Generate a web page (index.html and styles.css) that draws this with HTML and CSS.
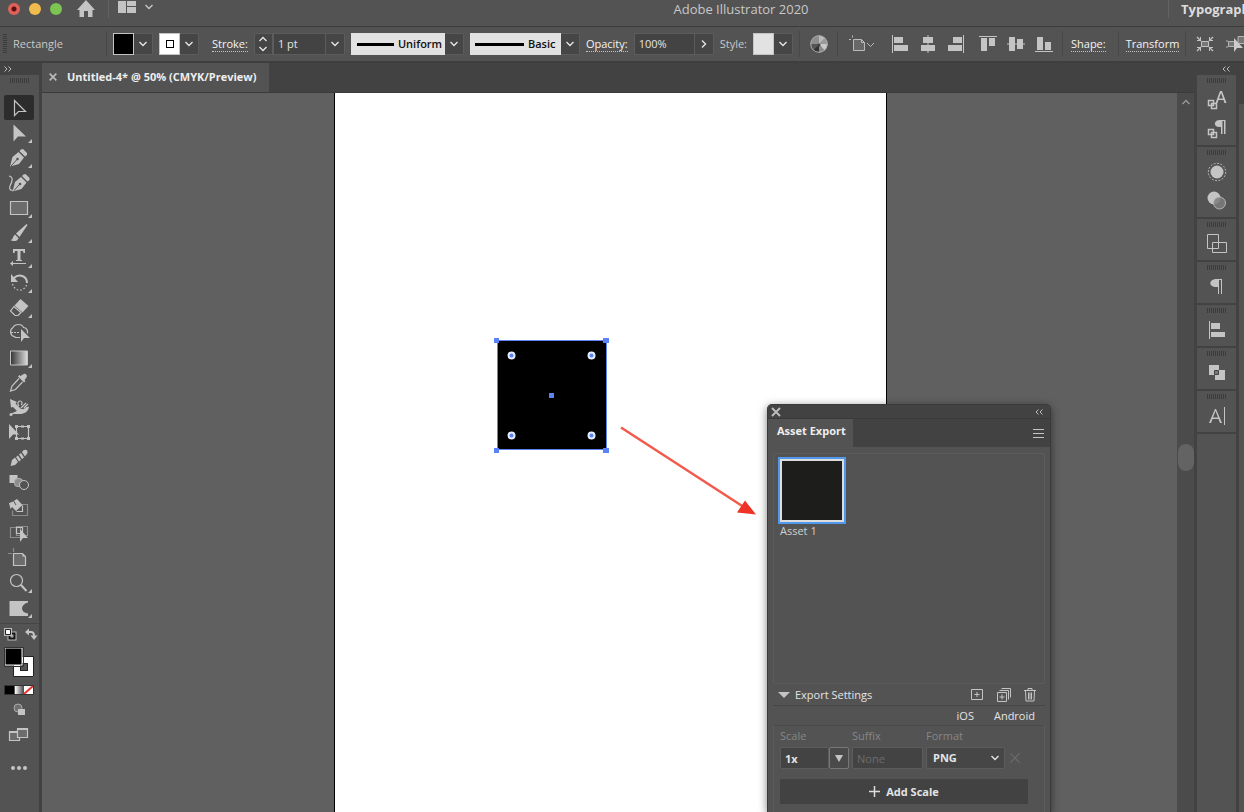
FILE: index.html
```html
<!DOCTYPE html>
<html lang="en">
<head>
    <meta charset="UTF-8">
    <meta name="viewport" content="width=device-width, initial-scale=1.0">
    <title>Adobe Illustrator 2020</title>
    <link rel="stylesheet" href="styles.css">
</head>
<body>
    <svg class="defs" aria-hidden="true">
        <symbol id="down" viewBox="0 0 10 6"><path d="M1.5 1L5 4.5 8.5 1" fill="none" stroke="currentColor" stroke-width="1.4"/></symbol>
        <symbol id="double" viewBox="0 0 8 6"><path d="M3.5 .5L1 3l2.5 2.5M7.5 .5L5 3l2.5 2.5" fill="none" stroke="currentColor"/></symbol>
        <symbol id="cross" viewBox="0 0 12 12"><path d="M2 2l8 8M10 2l-8 8" fill="none" stroke="currentColor"/></symbol>
    </svg>

    <header class="titlebar">
        <div class="window-buttons">
            <button class="light red" aria-label="Close"></button>
            <button class="light yellow" aria-label="Minimise"></button>
            <button class="light green" aria-label="Zoom"></button>
        </div>
        <button class="home" aria-label="Home"><svg width="20" height="18" viewBox="0 0 20 18"><path d="M10 0L1 10h2.5v7H8v-6h4v6h4.500v-7H19z"/></svg></button>
        <button class="arrange" aria-label="Arrange documents">
            <svg width="18" height="12" viewBox="0 0 18 12"><path d="M0 0h8v12H0zM9 0h9v5H9zM9 6h9v6H9z"/></svg>
            <svg width="10" height="6"><use href="#down"/></svg>
        </button>
        <h1>Adobe Illustrator 2020</h1>
        <button class="workspace">Typography</button>
    </header>

    <div class="controls">
        <span class="grip-side"></span>
        <span class="object-type">Rectangle</span>
        <span class="rule"></span>
        <div class="combo">
            <button class="swatch black" aria-label="Fill"></button>
            <button class="drop" aria-label="Fill options"><svg width="10" height="6"><use href="#down"/></svg></button>
        </div>
        <div class="combo">
            <button class="swatch white" aria-label="Stroke colour"></button>
            <button class="drop" aria-label="Stroke options"><svg width="10" height="6"><use href="#down"/></svg></button>
        </div>
        <label class="dotted stroke-label" for="stroke">Stroke:</label>
        <div class="combo">
            <div class="stepper">
                <button aria-label="Increase"><svg class="up" width="10" height="6"><use href="#down"/></svg></button>
                <button aria-label="Decrease"><svg width="10" height="6"><use href="#down"/></svg></button>
            </div>
            <input class="stroke-input" id="stroke" type="text" value="1 pt">
            <button class="drop" aria-label="Stroke weights"><svg width="10" height="6"><use href="#down"/></svg></button>
        </div>
        <div class="combo">
            <div class="profile">
                <svg width="37" height="3"><path d="M0 0h37v3H0z"/></svg>
                <select aria-label="Width profile"><option>Uniform</option></select>
            </div>
            <span class="drop"><svg width="10" height="6"><use href="#down"/></svg></span>
        </div>
        <div class="combo">
            <div class="profile brush">
                <svg width="49" height="3"><path d="M0 0h49v3H0z"/></svg>
                <select aria-label="Brush"><option>Basic</option></select>
            </div>
            <span class="drop"><svg width="10" height="6"><use href="#down"/></svg></span>
        </div>
        <label class="dotted opacity-label" for="opacity">Opacity:</label>
        <div class="combo">
            <input class="opacity-input" id="opacity" type="text" value="100%">
            <button class="drop" aria-label="Opacity slider"><svg class="right" width="10" height="6"><use href="#down"/></svg></button>
        </div>
        <span class="style-label">Style:</span>
        <div class="combo">
            <button class="swatch grey" aria-label="Style"></button>
            <button class="drop" aria-label="Style options"><svg width="10" height="6"><use href="#down"/></svg></button>
        </div>
        <span class="rule"></span>
        <button class="icon recolor" aria-label="Recolour artwork">
            <svg width="18" height="18" viewBox="0 0 18 18"><circle cx="9" cy="9" r="8.500" fill="#8d8d8d"/><path d="M9 9V.5A8.500 8.500 0 0 1 15 3z" fill="#bbb"/><path d="M9 9l6-6a8.500 8.500 0 0 1 2.500 6z" fill="#999"/><path d="M9 9h8.500a8.500 8.500 0 0 1-3 6.500z" fill="#c9c9c9"/><path d="M9 9l5.500 6.500a8.500 8.500 0 0 1-5.500 2z" fill="#8a8a8a"/><path d="M9 9v8.500a8.500 8.500 0 0 1-6-2.500z" fill="#333"/><path d="M9 9l-6 6A8.500 8.500 0 0 1 .5 9z" fill="#555"/><circle cx="9" cy="10" r="1.500" fill="#444"/><circle cx="9" cy="9" r="8.300" fill="none" stroke="#aaa"/></svg>
        </button>
        <span class="rule"></span>
        <button class="icon artopts" aria-label="Align to">
            <svg width="27" height="18" viewBox="0 0 27 18" fill="none" stroke="#bbb"><path d="M4.500 4.500h8l3 3v8h-11z" fill="#686868"/><path d="M12.500 4.500v3h3M3.500 .5v2M0 4.500h2"/><path d="M18 8l3.500 3.500L25 8"/></svg>
        </button>
        <div class="align">
            <button class="icon" aria-label="Align left"><svg width="18" height="20" viewBox="0 0 18 20"><path d="M1 1h1v18H1zM3 3h9v6H3zM3 11h14v6H3z"/></svg></button>
            <button class="icon" aria-label="Align centre"><svg width="18" height="20" viewBox="0 0 18 20"><path d="M8.500 1h1v18h-1zM4 3h10v6H4zM2 11h14v6H2z"/></svg></button>
            <button class="icon" aria-label="Align right"><svg width="18" height="20" viewBox="0 0 18 20"><path d="M16 1h1v18h-1zM6 3h9v6H6zM1 11h14v6H1z"/></svg></button>
        </div>
        <div class="align">
            <button class="icon" aria-label="Align top"><svg width="20" height="20" viewBox="0 0 20 20"><path d="M1 2h18v1H1zM3 4h6v13H3zM11 4h6v8h-6z"/></svg></button>
            <button class="icon" aria-label="Align middle"><svg width="20" height="20" viewBox="0 0 20 20"><path d="M1 9.500h18v1H1zM3 3h6v14H3zM11 5h6v10h-6z"/></svg></button>
            <button class="icon" aria-label="Align bottom"><svg width="20" height="20" viewBox="0 0 20 20"><path d="M1 17h18v1H1zM3 3h6v13H3zM11 8h6v8h-6z"/></svg></button>
        </div>
        <span class="rule"></span>
        <a class="dotted shape-link" href="#">Shape:</a>
        <span class="rule"></span>
        <a class="dotted transform-link" href="#">Transform</a>
        <span class="rule"></span>
        <button class="icon isolate" aria-label="Isolate"><svg width="18" height="16" viewBox="0 0 18 16" fill="none" stroke="#c4c4c4"><path d="M5.500 5.500h7v5h-7z" fill="#777"/><path d="M1 1l4 4M17 1l-4 4M1 15l4-4M17 15l-4-4" stroke-width="1.300"/><path d="M1 4.500h3.500V1M17 4.500h-3.500V1M1 11.500h3.500V15M17 11.500h-3.500V15"/></svg></button>
        <button class="icon" aria-label="Select similar"><svg width="24" height="18" viewBox="0 0 24 18" fill="none" stroke="#b5b5b5"><path d="M2.500 6.500h7v5h-7zM12 1.500h8v7h-8z" fill="#777"/><path d="M0 6h2M0 12h2"/><path d="M8 3v14l3-4h6z" fill="#ccc" stroke="none"/></svg></button>
    </div>

    <main class="workspace-area">
        <aside class="toolbox">
            <div class="side-head left"><svg class="flip" width="8" height="6"><use href="#double"/></svg></div>
            <div class="grip"></div>
            <div class="tools">
                <button class="tool active" aria-label="Selection"><svg viewBox="0 0 30 25"><path d="M10.500 5.500v15l4-4h7z" class="line"/></svg></button>
                <button class="tool more" aria-label="Direct selection"><svg viewBox="0 0 30 25"><path d="M9.500 4.500v17l4.500-5h8z"/></svg></button>
                <button class="tool more" aria-label="Pen"><svg viewBox="0 0 30 25"><path d="M17 4.500l2-.5 4 4v2l-2 1.500L15.500 6zM6 21.500l2.500-9.500L14.500 7l5.500 5.500-5 6.500z"/><path d="M7 21l6-6.500" class="cut"/><circle cx="13.500" cy="14" r="1.300" class="hole"/></svg></button>
                <button class="tool" aria-label="Curvature"><svg viewBox="0 0 30 25"><path d="M19.500 4.500l2-.5L25.500 8v2l-2 1.500L18 6zM8.500 21.500L11 12l6-5 5.500 5.500-5 6.500z"/><path d="M9.500 21l6-6.500" class="cut"/><circle cx="16" cy="14" r="1.300" class="hole"/><path d="M5 6c5 1 3 6 1 10-1 3 0 5 4 4" class="line"/></svg></button>
                <button class="tool more" aria-label="Rectangle"><svg viewBox="0 0 30 25"><path d="M6.500 6.500h17v13h-17z" class="line soft"/></svg></button>
                <button class="tool more" aria-label="Paintbrush"><svg viewBox="0 0 30 25"><path d="M22.500 4l1 1-8 12-3.500-3.500zM11 14.500l3.500 3.500c-1 4-6 3.500-8 2 3-.5 2-4 4.500-5.500z"/></svg></button>
                <button class="tool more" aria-label="Type"><svg viewBox="0 0 30 25"><path d="M9 4h12v4h-1.500l-.5-2h-2.500v9H18v1h-6v-1h1.500V6H11l-.5 2H9zM7 18h15v1H7z"/><path d="M6 18.500l3-2.500v5z"/></svg></button>
                <button class="tool more" aria-label="Rotate"><svg viewBox="0 0 30 25"><path d="M10 8c5-5 13-2 13 5" class="line thick"/><path d="M7 4v8h7z"/><path d="M22.500 15c-2 6-11 8-14-1" class="line" stroke-dasharray="1.500 2"/></svg></button>
                <button class="tool more" aria-label="Eraser"><svg viewBox="0 0 30 25"><path d="M16.500 4l8 7-6 6.500-8-7z"/><path d="M10 11.500l7 6-3 3H11L6.500 16z" class="line"/></svg></button>
                <button class="tool" aria-label="Shape builder"><svg viewBox="0 0 30 25"><path d="M16 17.500H12a5 5 0 0 1-2-1 5 5 0 0 1-1-9c2-4 9-4 10.500 0 3 0 4.500 3 4 6" class="line"/><path d="M7 12.500h9" class="line" stroke-dasharray="2 1"/><path d="M17 9v13l3-4h6z"/></svg></button>
                <button class="tool more" aria-label="Gradient"><svg viewBox="0 0 30 25"><defs><linearGradient id="g1"><stop stop-color="#333"/><stop offset="1" stop-color="#ddd"/></linearGradient></defs><path d="M6.500 6h17v14h-17z" fill="url(#g1)" stroke="#c4c4c4"/></svg></button>
                <button class="tool" aria-label="Eyedropper"><svg viewBox="0 0 30 25"><path d="M19 4.500c2-2 5 1 3.500 3L20.500 10l1 1-1.500 1.500-6-6L15.500 5l1 1z"/><path d="M15 8.500L8 16l-1.500 5L11.500 19.500 18.500 12" class="line"/></svg></button>
                <button class="tool" aria-label="Symbol sprayer"><svg viewBox="0 0 30 25"><path d="M6 4l7 3-1.500 1.500L17 14c4 1 5-3 8-2-1 5-5 7-9 7H8l5-3-4-4-2 .5z"/><path d="M15 11c-2-2-1-5 1-5s3 3 1 4M6 20c3-1 5-4 11-4M17 13l5-5M20 13l4-4" class="line"/><circle cx="7" cy="19.500" r="1.500"/></svg></button>
                <button class="tool" aria-label="Free transform"><svg viewBox="0 0 30 25"><path d="M12.500 6.500h12v12h-12z" class="line"/><path d="M11 5h3v3h-3zM23 5h3v3h-3zM11 17h3v3h-3zM23 17h3v3h-3zM17 5.500h3v2h-3zM17 17.500h3v2h-3z"/><path d="M5 4v15l4-4.500h6z"/></svg></button>
                <button class="tool" aria-label="Pencil"><svg viewBox="0 0 30 25"><path d="M6.500 21l1.500-6 3-2.500 3 4.500-3 3zM12 12l2-1.500 3 4.500-2 1.500zM15 9.500l2-1.500 3 4.500-2 1.500zM18 7c2-3 6-3 5.500 1L21 11.500z"/></svg></button>
                <button class="tool" aria-label="Blend"><svg viewBox="0 0 30 25"><path d="M5.500 5h8v8h-8z"/><rect x="10.500" y="8.500" width="8" height="8" rx="3" fill="#8e8e8e" stroke="#b5b5b5"/><circle cx="20" cy="15" r="4.500" fill="#535353" stroke="#c4c4c4"/></svg></button>
                <button class="tool" aria-label="Live paint bucket"><svg viewBox="0 0 30 25"><path d="M12.500 9.500h11v11h-15v-5" class="line dim"/><path d="M12.500 16.500h6v-6" class="line"/><path d="M5 8l3-1 5-3 5.500 6-6.500 6-4-4-1.500 2z"/><path d="M9 5l3 5" class="cut"/></svg></button>
                <button class="tool" aria-label="Live paint selection"><svg viewBox="0 0 30 25"><path d="M6.500 7.500h10v10h-10zM12.500 6.500h11v9h-11z" class="line dim"/><path d="M12.500 7.500h6v6h-6z" class="line"/><path d="M16 9v13l3-4h5z"/></svg></button>
                <button class="tool" aria-label="Artboard"><svg viewBox="0 0 30 25"><path d="M9.500 8.500h9l3 3v9h-12z" class="line soft"/><path d="M18.500 8.500v3h3z"/><path d="M9.500 3v4M4 8.500h4" class="line dim"/></svg></button>
                <button class="tool more" aria-label="Zoom"><svg viewBox="0 0 30 25"><circle cx="12.500" cy="10.500" r="6" class="line"/><path d="M17 15l5.500 6" class="line thick"/></svg></button>
                <button class="tool more" aria-label="Shaper"><svg viewBox="0 0 30 25"><path d="M5.500 6h18.500v1.500c-8 2-8 10 0 11V21H5.500z"/></svg></button>
            </div>
            <div class="colours">
                <svg width="34" height="16" viewBox="0 0 34 16"><path d="M5.500 6.500h5v5h-5z" fill="none" stroke="#bbb" stroke-width="4"/><path d="M5.500 6.500h5v5h-5z" fill="none" stroke="#111" stroke-width="2"/><path d="M0 1h8v8H0z" fill="#bbb"/><path d="M1.500 2.500h5v5h-5z" fill="#fff" stroke="#222"/><path d="M24 5h3q3 0 3 4" fill="none" stroke="#c4c4c4" stroke-width="2"/><path d="M21 5l4-3.500v7zM26.500 8.500h7L30 13z" fill="#c4c4c4"/></svg>
                <svg width="34" height="32" viewBox="0 0 34 32"><path d="M13 13h14v14H13z" fill="none" stroke="#fff" stroke-width="6"/><path d="M9.500 9.500h20v20h-20zM16.500 16.500h7v7h-7z" fill="none" stroke="#222"/><path d="M1 1h17v17H1z" stroke="#eee" fill="#000"/><path d="M.5.5h19v19H.5z" fill="none" stroke="#333"/></svg>
                <svg width="34" height="14" viewBox="0 0 34 14"><defs><linearGradient id="g2"><stop stop-color="#fff"/><stop offset="1" stop-color="#555"/></linearGradient></defs><path d="M1 3h9v8H1z"/><path d="M11 3h8v8h-8z" fill="url(#g2)"/><path d="M20 3h9v8h-9z" fill="#fff"/><path d="M20 11l9-8" stroke="#e33" stroke-width="2"/><path d="M.5 2.500h29v9H.5z" fill="none" stroke="#333"/></svg>
            </div>
            <button class="tool" aria-label="Draw modes"><svg viewBox="0 0 30 25"><circle cx="14" cy="11" r="4" fill="#707070" stroke="#aaa"/><path d="M14 12h7v6h-7z"/></svg></button>
            <button class="tool" aria-label="Screen mode"><svg viewBox="0 0 30 25"><path d="M5.500 9.500h10v9h-10z" class="line soft"/><path d="M13.500 6.500h10v9h-10z" class="line soft"/><path d="M5 9h8v2H5zM13 6h11v2H13z"/></svg></button>
            <button class="tool dots" aria-label="Edit toolbar"><svg viewBox="0 0 30 25"><circle cx="9" cy="13" r="2"/><circle cx="15" cy="13" r="2"/><circle cx="21" cy="13" r="2"/></svg></button>
        </aside>

        <section class="document">
            <nav class="tabs">
                <div class="tab">
                    <button class="close" aria-label="Close tab"><svg width="10" height="10"><use href="#cross"/></svg></button>
                    <span>Untitled-4* @ 50% (CMYK/Preview)</span>
                </div>
            </nav>
            <div class="stage">
                <div class="canvas">
                    <div class="artboard">
                        <svg class="artwork" width="262" height="180" viewBox="0 0 262 180">
                            <path d="M3.500 2.500h109v109h-109z" fill="#000" stroke="#5b83f5"/>
                            <g fill="#5b83f5"><path d="M0 0h5v5H0zM109 0h6v5h-6zM0 110h5v5H0zM109 110h6v5h-6zM55 55h5v5h-5z"/></g>
                            <g fill="#5b83f5" stroke="#e6ecff" stroke-width="2"><circle cx="17.500" cy="17.500" r="3"/><circle cx="97.500" cy="17.500" r="3"/><circle cx="17.500" cy="97.500" r="3"/><circle cx="97.500" cy="97.500" r="3"/></g>
                            <path d="M127 89.500l122 79" stroke="#f25a4b" stroke-width="2.500"/>
                            <path d="M262 176.500l-11-14-8 12z" fill="#ef3427"/>
                        </svg>
                    </div>
                </div>
                <div class="scrollbar">
                    <svg width="10" height="6" class="up"><use href="#down"/></svg>
                    <span class="thumb"></span>
                </div>

                <section class="export-panel">
                    <div class="panel-head">
                        <button class="close" aria-label="Close panel"><svg width="12" height="12"><use href="#cross"/></svg></button>
                        <button aria-label="Collapse panel"><svg width="8" height="6"><use href="#double"/></svg></button>
                    </div>
                    <div class="panel-tabs">
                        <h2>Asset Export</h2>
                        <button aria-label="Panel menu"><svg width="11" height="9"><path d="M0 .5h11M0 4.500h11M0 8.500h11" stroke="#c4c4c4"/></svg></button>
                    </div>
                    <div class="assets">
                        <button class="asset"><span class="preview"></span><span>Asset 1</span></button>
                    </div>
                    <div class="settings-head">
                        <button class="toggle"><svg width="12" height="6"><path d="M0 0h12L6 6z" fill="#c4c4c4"/></svg>Export Settings</button>
                        <div class="settings-icons">
                            <button aria-label="Add asset"><svg width="13" height="13" viewBox="0 0 13 13"><path d="M.5 1.500h11v10H.5zM6 4v5M3.500 6.500h5"/></svg></button>
                            <button aria-label="Add several assets"><svg width="14" height="14" viewBox="0 0 14 14"><path d="M.5 4.500h9v9h-9zM2.500 2.500h9v9M4.500 .5h9v9M5 6.500v5M2.500 9h5"/></svg></button>
                            <button aria-label="Delete"><svg width="12" height="14" viewBox="0 0 12 14"><path d="M0 2.500h12M4 2.500v-2h4v2M1.500 3l.5 10h8l.5-10M4.500 4.500v7M6 4.500v7M7.500 4.500v7"/></svg></button>
                        </div>
                    </div>
                    <div class="platforms">
                        <button>iOS</button>
                        <button>Android</button>
                    </div>
                    <div class="scales">
                        <div class="field">
                            <label for="scale">Scale</label>
                            <div class="combo"><input class="scale-input" id="scale" type="text" value="1x"><button class="drop outlined" aria-label="Scales"><svg width="8" height="7"><path d="M0 0h8L4 7z" fill="#c4c4c4"/></svg></button></div>
                        </div>
                        <div class="field">
                            <label for="suffix">Suffix</label>
                            <div class="combo"><input class="suffix-input" id="suffix" type="text" placeholder="None"></div>
                        </div>
                        <div class="field">
                            <label for="format">Format</label>
                            <div class="format"><select id="format"><option>PNG</option></select><svg width="10" height="6"><use href="#down"/></svg></div>
                        </div>
                        <button class="remove" aria-label="Remove scale"><svg width="14" height="14"><use href="#cross"/></svg></button>
                        <button class="add"><svg width="11" height="11"><path d="M5.500 0v11M0 5.500h11" stroke="#ddd" stroke-width="1.500"/></svg>Add Scale</button>
                    </div>
                </section>
            </div>
        </section>

        <aside class="dock">
            <div class="side-head"><svg width="8" height="6"><use href="#double"/></svg></div>
            <div class="dock-group">
                <div class="grip"></div>
                <button aria-label="Character styles"><svg viewBox="0 0 20 20"><path d="M8.500 13L13 1h2l4.500 12h-2l-1-3h-5l-1 3zM12 8.500h4L14 3z"/><path d="M1.500 10.500h5v5h-5zM4.500 13.500h5v5h-5z" class="line heavy"/></svg></button>
                <button aria-label="Paragraph styles"><svg viewBox="0 0 20 20"><path d="M18.500 1v14H17V2h-1.500v13H14V8c-8 1-8-7-1-7z"/><path d="M1.500 10.500h5v5h-5zM4.500 13.500h5v5h-5z" class="line heavy"/></svg></button>
            </div>
            <div class="dock-group">
                <div class="grip"></div>
                <button aria-label="Appearance"><svg viewBox="0 0 20 20"><circle cx="10" cy="10" r="6.500"/><circle cx="10" cy="10" r="8.700" class="line" stroke-dasharray="1.800 1.600"/></svg></button>
                <button aria-label="Transparency"><svg viewBox="0 0 20 20"><circle cx="7" cy="7" r="6.500"/><circle cx="12.500" cy="12" r="6" fill="#7c7c7c" fill-opacity=".85" stroke="#b5b5b5"/></svg></button>
            </div>
            <div class="dock-group">
                <div class="grip"></div>
                <button aria-label="Artboards"><svg viewBox="0 0 20 20"><path d="M.5.5h11v14H.5zM5.500 8.500h14v10h-14z" fill="#535353" stroke="#c4c4c4"/></svg></button>
            </div>
            <div class="dock-group">
                <div class="grip"></div>
                <button aria-label="Paragraph"><svg viewBox="0 0 20 20"><path d="M15 2v15h-1V3h-2v14h-1v-7c-10 1-10-8-1-8z"/></svg></button>
            </div>
            <div class="dock-group">
                <div class="grip"></div>
                <button aria-label="Align"><svg viewBox="0 0 20 20"><path d="M2 1h1v18H2zM4 3h9v6H4zM4 12h14v5H4z"/></svg></button>
            </div>
            <div class="dock-group">
                <div class="grip"></div>
                <button aria-label="Pathfinder"><svg viewBox="0 0 20 20"><path d="M2 2h10v5h6v10H8v-5H2z"/><path d="M7.500 7.500h4v4h-4z" fill="#777" stroke="#444"/></svg></button>
            </div>
            <div class="dock-group">
                <div class="grip"></div>
                <button aria-label="Character"><svg viewBox="0 0 20 20"><path d="M2 17L8 3h1l6 14h-2l-1.500-4h-6L4 17zM6 11.500h5L8.500 5zM17 1h1v18h-1z"/></svg></button>
            </div>
        </aside>
        <aside class="next-dock"></aside>
    </main>
</body>
</html>
```
FILE: styles.css
```css
* {
    box-sizing: border-box;
}

body {
    margin: 0;
    height: 100vh;
    display: flex;
    flex-direction: column;
    overflow: hidden;
    background: #535353;
    color: #e4e4e4;
    font: 500 11px/16px "Open Sans", "Noto Sans", sans-serif;
}

button, input, select {
    margin: 0;
    padding: 0;
    border: 0;
    border-radius: 0;
    background: none;
    color: inherit;
    font: inherit;
    appearance: none;
}

button {
    display: flex;
    align-items: center;
    justify-content: center;
    flex-shrink: 0;
}

svg {
    display: block;
    flex-shrink: 0;
}

.defs {
    position: absolute;
    width: 0;
    height: 0;
}

.up {
    transform: rotate(180deg);
}

.right {
    transform: rotate(-90deg);
}

.flip {
    transform: scaleX(-1);
}

.close {
    stroke-width: 2;
    color: #bbb;
}

/* title bar */
.titlebar {
    display: flex;
    height: 27px;
    padding-left: 8px;
    padding-bottom: 8px;
    align-items: center;
    border-bottom: 1px solid #3c3c3c;
    flex-shrink: 0;
    fill: #c4c4c4;
}

.window-buttons {
    display: flex;
    gap: 9px;
}

.light {
    width: 12px;
    height: 12px;
    border-radius: 50%;
}

.red {
    background: radial-gradient(circle, #5a1010 2px, #e0605a 3px);
}

.yellow {
    background: #efbb4e;
}

.green {
    background: #7cc552;
}

.home {
    margin-left: 14px;
}

.arrange {
    gap: 8px;
    height: 18px;
    margin-left: 12px;
    padding-left: 9px;
    padding-bottom: 4px;
    border-left: 1px solid #636363;
    color: #c4c4c4;
}

.titlebar h1 {
    flex: 1;
    margin: 0;
    padding-left: 160px;
    text-align: center;
    font-size: 13px;
    font-weight: 500;
    color: #c8c8c8;
}

.workspace {
    width: 76px;
    height: 18px;
    padding-left: 12px;
    justify-content: flex-start;
    border-left: 1px solid #636363;
    font-size: 13px;
    font-weight: 700;
    color: #ddd;
    overflow: hidden;
}

/* control bar */
.controls {
    display: flex;
    height: 36px;
    align-items: center;
    gap: 6px;
    padding-left: 3px;
    border-bottom: 2px solid #3e3e3e;
    flex-shrink: 0;
    overflow: hidden;
    white-space: nowrap;
}

.controls > * {
    flex-shrink: 0;
}

.grip-side {
    width: 4px;
    height: 20px;
    background: repeating-linear-gradient(#3c3c3c 0 1px, #535353 1px 2px);
}

.object-type {
    width: 87px;
    color: #c8c8c8;
}

.rule {
    width: 1px;
    height: 26px;
    background: #484848;
}

.combo {
    display: flex;
    height: 22px;
}

.swatch {
    width: 21px;
    border: 1px solid #c4c4c4;
}

.black {
    background: #000;
}

.grey {
    background: #e2e2e2;
}

.white {
    background: #fff;
}

.white::after {
    content: "";
    width: 6px;
    height: 6px;
    border: 1px solid #000;
}

.drop {
    display: flex;
    width: 19px;
    align-items: center;
    justify-content: center;
    background: #464646;
    border: 1px solid #5c5c5c;
    border-left: 0;
    border-radius: 0 2px 2px 0;
}

.dotted {
    color: #f4f4f4;
    line-height: 14px;
    border-bottom: 1px dotted #c4c4c4;
    text-decoration: none;
}

.stroke-label {
    margin-left: 7px;
}

.stepper {
    width: 19px;
    display: flex;
    flex-direction: column;
    border: 1px solid #5c5c5c;
    border-radius: 2px 0 0 2px;
    background: #464646;
}

.stepper button {
    flex: 1;
}

input {
    min-width: 0;
    background: #434343;
    border: 1px solid #5c5c5c;
    padding-left: 4px;
}

.stroke-input {
    width: 53px;
}

.opacity-input {
    width: 61px;
}

.profile {
    display: flex;
    width: 94px;
    align-items: center;
    gap: 4px;
    padding-left: 6px;
    background: #e2e2e2;
    color: #111;
}

.profile select {
    flex: 1;
    min-width: 0;
    font-weight: 600;
}

.brush {
    width: 91px;
    padding-left: 5px;
}

.style-label {
    color: #c8c8c8;
}

.icon {
    fill: #c4c4c4;
}

.recolor {
    margin: 0 3px 0 4px;
}

.artopts {
    margin: 0 2px 0 5px;
}

.align {
    display: flex;
    gap: 10px;
    margin-left: 7px;
}

.align + .align {
    gap: 8px;
    margin-right: 2px;
}

.shape-link {
    margin: 0 6px 0 2px;
}

.transform-link {
    margin-left: 1px;
}

.isolate {
    margin: 0 6px 0 4px;
}

/* tools */
.workspace-area {
    flex: 1;
    min-height: 0;
    display: flex;
}

.toolbox {
    width: 42px;
    flex-shrink: 0;
    border-right: 3px solid #424242;
    overflow: hidden;
}

.side-head {
    display: flex;
    height: 12px;
    align-items: center;
    justify-content: flex-end;
    padding-right: 6px;
    background: #424242;
    color: #bbb;
}

.left {
    justify-content: flex-start;
    padding-left: 4px;
}

.grip {
    width: 20px;
    height: 5px;
    margin: 3px auto 12px;
    background: repeating-linear-gradient(90deg, #3c3c3c 0 1px, #535353 1px 2px);
}

.tools {
    padding-bottom: 3px;
    border-bottom: 1px solid #464646;
}

.tool {
    position: relative;
    width: 30px;
    height: 25px;
    margin-left: 4px;
}

.tool svg {
    width: 30px;
    height: 25px;
    fill: #c4c4c4;
}

.active {
    background: #2c2c2c;
    border-radius: 2px;
}

.more::after {
    content: "";
    position: absolute;
    right: 2px;
    bottom: 2px;
    border-left: 4px solid transparent;
    border-bottom: 4px solid #c4c4c4;
}

.toolbox .line, .dock .line {
    fill: none;
    stroke: #c4c4c4;
}

.toolbox .line {
    stroke-width: 1.2;
}

.toolbox .soft {
    fill: #6c6c6c;
}

.toolbox .dim {
    stroke: #8c8c8c;
}

.toolbox .thick {
    stroke-width: 2;
}

.dock .heavy {
    stroke-width: 1.5;
}

.cut {
    stroke: #535353;
}

.hole {
    fill: #535353;
}

.colours {
    display: grid;
    gap: 4px;
    padding: 3px 0 0 4px;
}

.dots {
    margin-top: 8px;
}

/* document */
.document {
    flex: 1;
    min-width: 0;
    display: flex;
    flex-direction: column;
}

.tabs {
    display: flex;
    height: 30px;
    flex-shrink: 0;
    background: #424242;
    border-bottom: 1px solid #3a3a3a;
}

.tab {
    display: flex;
    align-items: center;
    gap: 9px;
    padding: 0 12px 2px 6px;
    background: #535353;
    font-weight: 700;
    color: #eee;
}

.stage {
    position: relative;
    flex: 1;
    display: flex;
    min-height: 0;
}

.canvas {
    flex: 1;
    display: flex;
    justify-content: center;
    padding-left: 2px;
    background: #606060;
}

.artboard {
    position: relative;
    width: 553px;
    background: #fff;
    border: solid #000;
    border-width: 0 1px;
}

.artwork {
    position: absolute;
    left: 159px;
    top: 245px;
}

.scrollbar {
    position: relative;
    width: 17px;
    padding: 6px 4px;
    background: #4b4b4b;
    color: #999;
}

.thumb {
    position: absolute;
    left: 1px;
    top: 351px;
    width: 16px;
    height: 27px;
    border-radius: 8px;
    background: #636363;
}

/* asset export panel */
.export-panel {
    position: absolute;
    right: 143px;
    top: 311px;
    bottom: 0;
    width: 284px;
    overflow: hidden;
    background: #535353;
    border: 1px solid #3a3a3a;
    border-bottom: 0;
    border-radius: 5px 5px 0 0;
    box-shadow: 0 2px 8px rgba(0, 0, 0, 0.5);
}

.panel-head {
    display: flex;
    height: 14px;
    justify-content: space-between;
    align-items: center;
    padding: 0 7px 0 2px;
    background: #424242;
    border-bottom: 1px solid #3a3a3a;
    color: #bbb;
}

.panel-tabs {
    display: flex;
    height: 28px;
    justify-content: space-between;
    padding-right: 6px;
    background: #424242;
}

.panel-tabs h2 {
    margin: 0;
    padding: 4px 7px 0 9px;
    background: #535353;
    font-size: 11px;
    font-weight: 700;
    color: #eee;
}

.assets {
    height: 231px;
    margin: 6px 5px 0;
    padding: 3px 4px;
    border: 1px solid #5c5c5c;
    border-radius: 2px;
}

.asset {
    flex-direction: column;
    align-items: flex-start;
    color: #d0d0d0;
    line-height: 14px;
}

.asset span + span {
    padding-left: 2px;
}

.preview {
    width: 68px;
    height: 67px;
    border: 2px solid #5299ee;
    background: #1d1d1b;
    box-shadow: inset 0 0 0 2px #ddd;
}

.settings-head {
    display: flex;
    height: 22px;
    margin: 0 5px;
    padding: 0 9px 0 5px;
    justify-content: space-between;
    align-items: center;
    border-bottom: 1px solid #464646;
}

.toggle {
    gap: 5px;
}

.settings-icons {
    display: flex;
    gap: 13px;
    fill: none;
    stroke: #c4c4c4;
}

.platforms {
    display: flex;
    height: 19px;
    justify-content: flex-end;
    gap: 20px;
    padding-right: 15px;
}

.scales {
    display: flex;
    flex-wrap: wrap;
    align-items: flex-end;
    gap: 10px 3px;
    height: 100px;
    margin: 0 5px;
    padding: 2px 6px 0;
    align-content: flex-start;
    border: 1px solid #5c5c5c;
    border-top-color: #4a4a4a;
}

.scales label {
    display: block;
    height: 19px;
    color: #868686;
}

.scales input, .format {
    height: 22px;
    border-radius: 2px;
}

.scale-input {
    width: 49px;
    font-weight: 700;
}

.outlined {
    width: 20px;
    border: 1px solid #777;
    border-radius: 2px;
    background: #4a4a4a;
}

.suffix-input {
    width: 71px;
}

.suffix-input::placeholder {
    color: #6c6c6c;
    opacity: 1;
}

.format {
    display: flex;
    width: 79px;
    align-items: center;
    padding: 0 4px 0 6px;
    background: #464646;
    border: 1px solid #5c5c5c;
}

.format select {
    flex: 1;
    font-weight: 700;
}

.remove {
    height: 22px;
    color: #6c6c6c;
}

.add {
    width: 248px;
    height: 25px;
    gap: 6px;
    background: #424242;
    font-weight: 700;
}

/* right dock */
.dock {
    width: 45px;
    flex-shrink: 0;
    border: solid #424242;
    border-width: 0 3px;
}

.dock-group {
    border-bottom: 2px solid #424242;
}

.dock .grip {
    margin: 0 auto;
    height: 12px;
    border: solid #535353;
    border-width: 3px 0 4px;
}

.dock button {
    width: 100%;
    height: 29px;
    padding-bottom: 4px;
}

.dock button svg {
    width: 20px;
    height: 20px;
    fill: #c4c4c4;
}

.next-dock {
    width: 5px;
    flex-shrink: 0;
    border-top: 41px solid #424242;
}
```
